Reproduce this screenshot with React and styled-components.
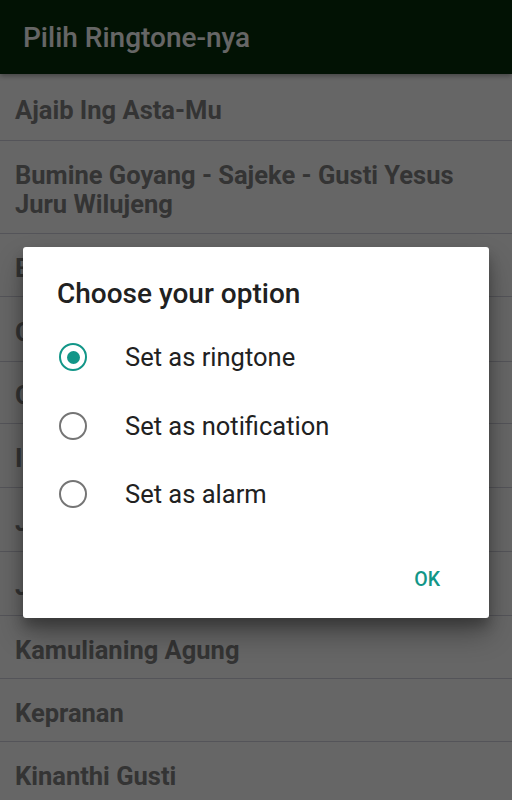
import React, { useState } from "react";
import styled, { createGlobalStyle } from "styled-components";

const GlobalStyle = createGlobalStyle`
  html, body { margin: 0; padding: 0; }
  body { font-family: Roboto, "Noto Sans", "Liberation Sans", sans-serif; }
  * { box-sizing: border-box; }
`;

const Screen = styled.div`
  position: relative;
  width: 512px;
  height: 800px;
  overflow: hidden;
  background: #ffffff;
`;

const AppBar = styled.header`
  position: relative;
  z-index: 1;
  height: 74px;
  display: flex;
  align-items: center;
  padding-left: 23px;
  background: #052d0a;
  color: #ffffff;
  font-size: 28px;
  font-weight: 500;
  box-shadow: 0 2px 5px rgba(0, 0, 0, 0.35);
`;

const List = styled.ul`
  list-style: none;
  margin: 0;
  padding: 0;
`;

const Row = styled.li`
  display: flex;
  align-items: center;
  min-height: ${(p) => p.$h}px;
  padding: 6px 15px 0;
  border-bottom: 1px solid #d2d2de;
  color: #838383;
  font-size: 25.5px;
  font-weight: 700;
  line-height: 29px;
`;

const Scrim = styled.div`
  position: absolute;
  inset: 0;
  z-index: 2;
  background: rgba(0, 0, 0, 0.6);
  display: flex;
  justify-content: center;
  align-items: flex-start;
  padding-top: 247px;
`;

const Dialog = styled.div`
  width: 466px;
  height: 371px;
  display: flex;
  flex-direction: column;
  background: #ffffff;
  border-radius: 3px;
  box-shadow: 0 16px 28px rgba(0, 0, 0, 0.32), 0 8px 12px rgba(0, 0, 0, 0.22);
`;

const Title = styled.h2`
  margin: 0;
  padding: 31px 34px 0;
  font-size: 28px;
  line-height: 32px;
  font-weight: 500;
  color: #212121;
`;

const Options = styled.div`
  margin-top: 13px;
  display: flex;
  flex-direction: column;
`;

const Option = styled.label`
  height: 68.5px;
  display: flex;
  align-items: center;
  gap: 38px;
  padding-left: 36px;
  font-size: 25.5px;
  color: #212121;
  cursor: pointer;
`;

const RadioRing = styled.span`
  width: 28px;
  height: 28px;
  border-radius: 50%;
  border: 2.6px solid ${(p) => (p.$checked ? "#129688" : "#757575")};
  display: flex;
  align-items: center;
  justify-content: center;
  flex-shrink: 0;
`;

const RadioDot = styled.span`
  width: 13px;
  height: 13px;
  border-radius: 50%;
  background: #129688;
`;

const Actions = styled.div`
  margin-top: auto;
  height: 48px;
  margin-bottom: 15px;
  display: flex;
  justify-content: flex-end;
  align-items: center;
  padding-right: 37px;
`;

const TextButton = styled.button`
  border: none;
  background: transparent;
  padding: 0 12px;
  height: 48px;
  font-family: inherit;
  font-size: 19.5px;
  font-weight: 500;
  color: #129688;
  cursor: pointer;
`;

const songs = [
  { name: "Ajaib Ing Asta-Mu", h: 67 },
  { name: "Bumine Goyang - Sajeke - Gusti Yesus Juru Wilujeng", h: 93 },
  { name: "Berkah Dalem Gusti", h: 63 },
  { name: "Cahyaning Gusti", h: 65 },
  { name: "Celak Kaliyan Gusti", h: 62 },
  { name: "Ing Ngarsaning Gusti", h: 64 },
  { name: "Jumbuh Ing Karsa", h: 64 },
  { name: "Jaman Kawilujengan", h: 64 },
  { name: "Kamulianing Agung", h: 63 },
  { name: "Kepranan", h: 63 },
  { name: "Kinanthi Gusti", h: 63 },
];

const options = ["Set as ringtone", "Set as notification", "Set as alarm"];

export default function App() {
  const [selected, setSelected] = useState(0);
  return (
    <>
      <GlobalStyle />
      <Screen>
        <AppBar>Pilih Ringtone-nya</AppBar>
        <List>
          {songs.map((s) => (
            <Row key={s.name} $h={s.h}>
              {s.name}
            </Row>
          ))}
        </List>
        <Scrim>
          <Dialog>
            <Title>Choose your option</Title>
            <Options>
              {options.map((o, i) => (
                <Option key={o} onClick={() => setSelected(i)}>
                  <RadioRing $checked={selected === i}>
                    {selected === i && <RadioDot />}
                  </RadioRing>
                  {o}
                </Option>
              ))}
            </Options>
            <Actions>
              <TextButton>OK</TextButton>
            </Actions>
          </Dialog>
        </Scrim>
      </Screen>
    </>
  );
}
